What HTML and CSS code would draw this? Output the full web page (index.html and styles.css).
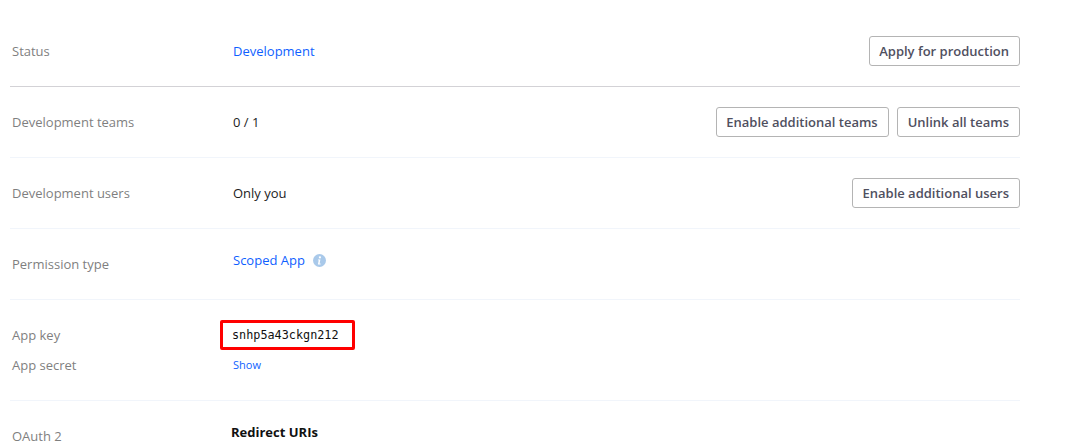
FILE: index.html
```html
<!DOCTYPE html>
<html lang="en">
<head>
  <meta charset="UTF-8">
  <title>App settings</title>
  <link rel="stylesheet" href="styles.css">
</head>
<body>
  <div class="settings">
    <div class="row row-strong">
      <div class="label">Status</div>
      <div class="value"><a href="#">Development</a></div>
      <div class="actions"><button>Apply for production</button></div>
    </div>
    <div class="row">
      <div class="label">Development teams</div>
      <div class="value">0 / 1</div>
      <div class="actions">
        <button>Enable additional teams</button>
        <button>Unlink all teams</button>
      </div>
    </div>
    <div class="row">
      <div class="label">Development users</div>
      <div class="value">Only you</div>
      <div class="actions"><button>Enable additional users</button></div>
    </div>
    <div class="row">
      <div class="label">Permission type</div>
      <div class="value value-raised">
        <a href="#">Scoped App</a>
        <svg class="info" width="13" height="13" viewBox="0 0 13 13">
          <circle cx="6.5" cy="6.5" r="6.5" fill="#a9c9ea"/>
          <rect x="5.9" y="2.4" width="2" height="1.9" fill="#fff"/>
          <path d="M5 5.4h2.4l-.8 4.1h1v.9H4.9l.8-4.1h-.9z" fill="#fff"/>
        </svg>
      </div>
    </div>
    <div class="row row-keys">
      <div class="key-line">
        <div class="label">App key</div>
        <div class="value"><span class="app-key">snhp5a43ckgn212</span></div>
      </div>
      <div class="key-line">
        <div class="label">App secret</div>
        <div class="value"><a class="small-link" href="#">Show</a></div>
      </div>
    </div>
    <div class="row row-oauth">
      <div class="label">OAuth 2</div>
      <div class="value"><strong>Redirect URIs</strong></div>
    </div>
  </div>
</body>
</html>
```
FILE: styles.css
```css
html, body {
  margin: 0;
  height: 444px;
  overflow: hidden;
  background-color: #fff;
}

body {
  font-family: "Open Sans", sans-serif;
  font-size: 13px;
  color: #1c1c1c;
}

.settings {
  width: 1010px;
  margin-left: 10px;
  padding-top: 16px;
}

.row {
  display: flex;
  align-items: center;
  height: 70px;
  border-bottom: 1px solid #f1f5fb;
}

.row-strong {
  border-bottom-color: #d3d2d6;
}

.label {
  width: 221px;
  padding-left: 2px;
  flex-shrink: 0;
  color: #7f7f7f;
}

.value {
  flex: 1;
}

.value-raised {
  display: flex;
  align-items: center;
  gap: 8px;
  margin-bottom: 8px;
}

a {
  color: #0f5fff;
  text-decoration: none;
}

.actions {
  display: flex;
  gap: 8px;
}

button {
  height: 30px;
  padding: 0 10px 0 9px;
  font-family: inherit;
  font-size: 13px;
  font-weight: 600;
  color: #50505f;
  background-color: #fff;
  border: 1px solid #b4b4b4;
  border-radius: 3px;
}

button + button {
  padding-left: 10px;
}

.info {
  display: block;
}

.row-keys {
  flex-direction: column;
  align-items: stretch;
  justify-content: center;
  height: 100px;
}

.key-line {
  display: flex;
  align-items: center;
  height: 30px;
}

.app-key {
  display: inline-block;
  margin-left: -13px;
  padding: 0 13px 0 9px;
  line-height: 24px;
  font-family: "DejaVu Sans Mono", monospace;
  font-size: 11.8px;
  color: #111;
  border: 3px solid #f00;
  border-radius: 2px;
}

.small-link {
  display: block;
  margin-bottom: 2px;
  font-size: 11px;
}

.row-oauth {
  box-sizing: border-box;
  align-items: flex-start;
  height: 43px;
  border-bottom: none;
  padding-top: 22px;
}

.row-oauth .label {
  padding-top: 5px;
  line-height: 16px;
}

.row-oauth strong {
  margin-left: -2px;
  color: #111;
}
```
